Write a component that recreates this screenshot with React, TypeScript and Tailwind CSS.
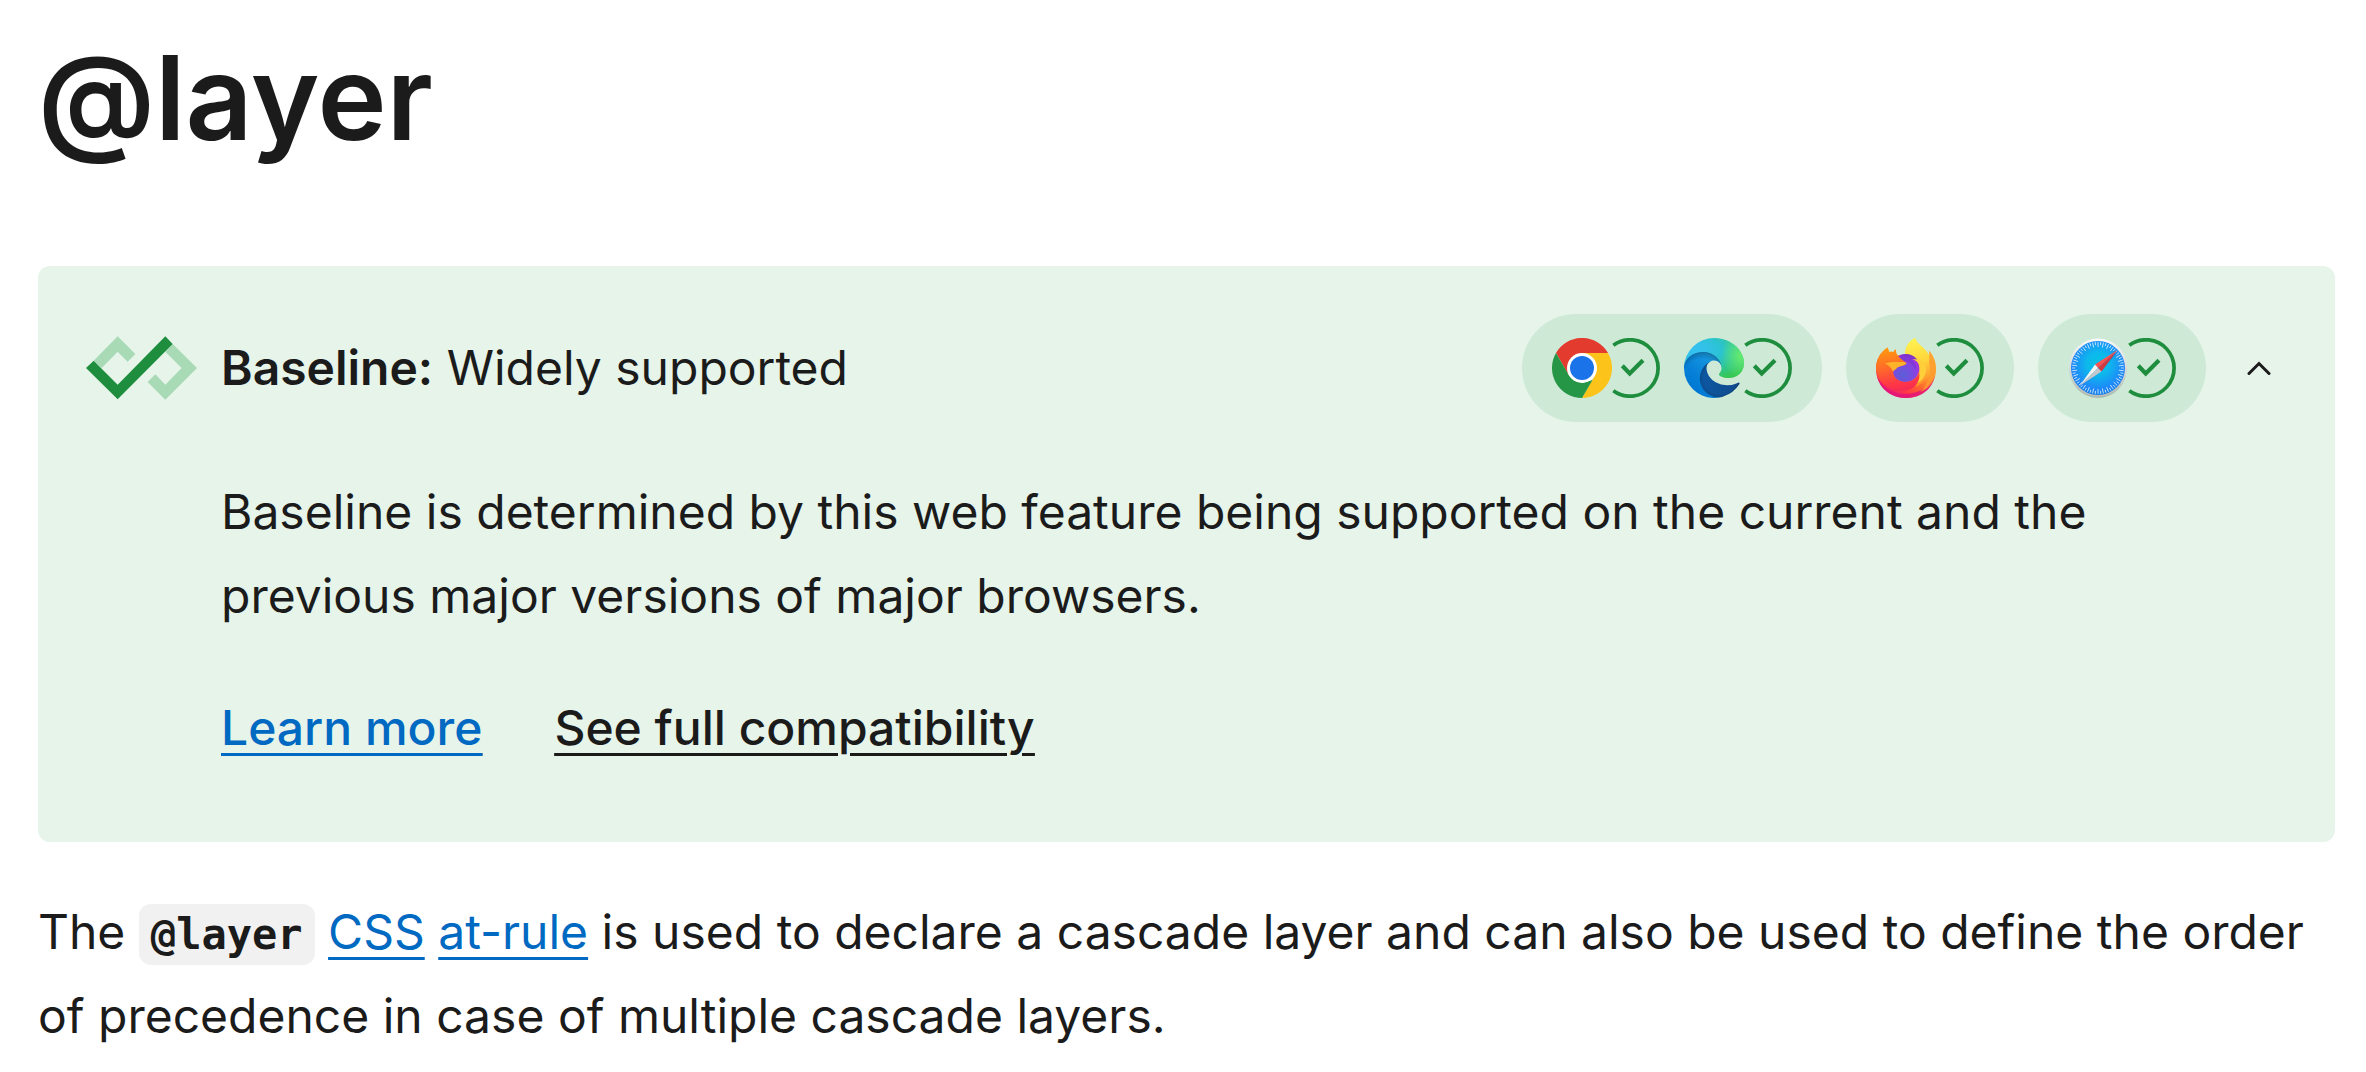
import React, { useState } from "react";

function BaselineLogo() {
  return (
    <svg viewBox="78 110 333 190" className="h-16 w-[111px] shrink-0" aria-hidden="true">
      <path fill="#a8dab5" d="M101 183 173 110l53 53-23 23-30-30-48 49z" />
      <path fill="#a8dab5" d="m338 133 73 72-95 95-53-53 23-23 30 31 49-50-49-49z" />
      <path fill="#1e8e3e" d="m78 205 23-22 72 72 143-145 22 23-165 166z" />
    </svg>
  );
}

function ChromeLogo() {
  return (
    <svg viewBox="0 0 60 60" className="size-[60px]" role="img" aria-label="Chrome">
      <path fill="#e33b2e" d="M4 15a30 30 0 0 1 52 0H30L17 37.5z" />
      <path fill="#fcc31a" d="M56 15a30 30 0 0 1-26 45l13-22.5L30 15z" />
      <path fill="#259645" d="M30 60A30 30 0 0 1 4 15l13 22.5L30 45l10.500-3z" />
      <circle cx="30" cy="30" r="15" fill="#fff" />
      <circle cx="30" cy="30" r="12" fill="#1a73e8" />
    </svg>
  );
}

function EdgeLogo() {
  return (
    <svg viewBox="0 0 256 256" className="size-[60px]" role="img" aria-label="Edge">
      <defs>
        <linearGradient id="edge-a" x1="63.33" y1="180" x2="241.67" y2="180" gradientUnits="userSpaceOnUse">
          <stop offset="0" stopColor="#0c59a4" />
          <stop offset="1" stopColor="#114a8b" />
        </linearGradient>
        <radialGradient id="edge-b" cx="161.83" cy="788.4" r="95.38" gradientTransform="matrix(.99992 0 0 .9498 -4.62 -570.39)" gradientUnits="userSpaceOnUse">
          <stop offset=".72" stopOpacity="0" />
          <stop offset=".95" stopOpacity=".53" />
          <stop offset="1" />
        </radialGradient>
        <linearGradient id="edge-c" x1="157.35" y1="104" x2="45.96" y2="226" gradientUnits="userSpaceOnUse">
          <stop offset="0" stopColor="#1b9de2" />
          <stop offset=".16" stopColor="#1595df" />
          <stop offset=".67" stopColor="#0680d7" />
          <stop offset="1" stopColor="#0078d4" />
        </linearGradient>
        <radialGradient id="edge-d" cx="-340.29" cy="62.99" r="143.24" gradientTransform="matrix(.15 -.99 -.8 -.12 176.64 -125.4)" gradientUnits="userSpaceOnUse">
          <stop offset=".76" stopOpacity="0" />
          <stop offset=".95" stopOpacity=".5" />
          <stop offset="1" />
        </radialGradient>
        <radialGradient id="edge-e" cx="113.37" cy="570.21" r="202.43" gradientTransform="matrix(-.04 1 2.13 .08 -1179.54 -106.69)" gradientUnits="userSpaceOnUse">
          <stop offset="0" stopColor="#35c1f1" />
          <stop offset=".11" stopColor="#34c1ed" />
          <stop offset=".23" stopColor="#2fc2df" />
          <stop offset=".31" stopColor="#2bc3d2" />
          <stop offset=".67" stopColor="#36c752" />
        </radialGradient>
        <radialGradient id="edge-f" cx="376.52" cy="567.97" r="97.34" gradientTransform="matrix(.28 .96 .78 -.23 -303.76 -148.5)" gradientUnits="userSpaceOnUse">
          <stop offset="0" stopColor="#66eb6e" />
          <stop offset="1" stopColor="#66eb6e" stopOpacity="0" />
        </radialGradient>
        <path id="edge-dark" d="M235.68 195.46a93.73 93.73 0 0 1-10.54 4.71 101.87 101.87 0 0 1-35.9 6.46c-47.32 0-88.54-32.55-88.54-74.32A31.48 31.48 0 0 1 117.13 105c-42.8 1.8-53.8 46.4-53.8 72.53 0 73.88 68.09 81.37 82.76 81.37 7.91 0 19.84-2.3 27-4.56l1.31-.44a128.34 128.34 0 0 0 66.6-52.8 4 4 0 0 0-5.32-5.64z" />
        <path id="edge-mid" d="M110.34 246.34A79.2 79.2 0 0 1 87.6 225a80.72 80.72 0 0 1 29.53-120c3.12-1.47 8.45-4.13 15.54-4a32.35 32.35 0 0 1 25.69 13 31.88 31.88 0 0 1 6.36 18.66c0-.21 24.46-79.6-80-79.6-43.9 0-80 41.66-80 78.21a130.15 130.15 0 0 0 12.11 56 128 128 0 0 0 156.38 67.11 75.55 75.55 0 0 1-62.78-8z" />
        <path id="edge-top" d="M156.94 153.78c-.81 1.05-3.3 2.5-3.3 5.66 0 2.61 1.7 5.12 4.72 7.23 14.38 10 41.49 8.68 41.56 8.68a59.56 59.56 0 0 0 30.27-8.35 61.38 61.38 0 0 0 30.43-52.88c.26-22.41-8-37.31-11.34-43.91C228.09 28.76 182.35 5 132.61 5a128 128 0 0 0-128 126.2c.48-36.54 36.8-66.05 80-66.05 3.5 0 23.46.34 42 10.07 16.34 8.58 24.9 18.94 30.85 29.21 6.18 10.67 7.28 24.15 7.28 29.52s-2.74 13.33-7.8 19.83z" />
      </defs>
      <g transform="translate(-4.63 -4.92)">
        <use href="#edge-dark" fill="url(#edge-a)" />
        <use href="#edge-dark" fill="url(#edge-b)" opacity=".35" />
        <use href="#edge-mid" fill="url(#edge-c)" />
        <use href="#edge-mid" fill="url(#edge-d)" opacity=".41" />
        <use href="#edge-top" fill="url(#edge-e)" />
        <use href="#edge-top" fill="url(#edge-f)" />
      </g>
    </svg>
  );
}

function FirefoxLogo() {
  return (
    <svg viewBox="0 0 60 60" className="size-[60px]" role="img" aria-label="Firefox">
      <defs>
        <linearGradient id="ff-body" x1="50" y1="8" x2="18" y2="60" gradientUnits="userSpaceOnUse">
          <stop offset="0" stopColor="#ffe141" />
          <stop offset=".35" stopColor="#ffb02d" />
          <stop offset=".6" stopColor="#ff6a2c" />
          <stop offset=".82" stopColor="#ff3647" />
          <stop offset="1" stopColor="#e31587" />
        </linearGradient>
        <linearGradient id="ff-left" x1="14" y1="10" x2="22" y2="58" gradientUnits="userSpaceOnUse">
          <stop offset="0" stopColor="#ff980e" />
          <stop offset=".4" stopColor="#ff6a2a" />
          <stop offset=".75" stopColor="#ff3647" />
          <stop offset="1" stopColor="#f0245c" />
        </linearGradient>
        <linearGradient id="ff-flame" x1="40" y1="0" x2="50" y2="46" gradientUnits="userSpaceOnUse">
          <stop offset="0" stopColor="#fff44f" />
          <stop offset=".5" stopColor="#ffd53c" />
          <stop offset="1" stopColor="#ff8a2c" />
        </linearGradient>
        <radialGradient id="ff-globe" cx="27" cy="37" r="22" gradientUnits="userSpaceOnUse">
          <stop offset="0" stopColor="#5b5fd6" />
          <stop offset=".45" stopColor="#7a4be0" />
          <stop offset=".8" stopColor="#a035e0" />
          <stop offset="1" stopColor="#8a2bc4" />
        </radialGradient>
      </defs>
      <path fill="url(#ff-body)" d="M11.500 9.600C12.200 11 12.700 12.600 13 14c1.600-.3 3.200-.1 4.300.2.500-1.200 1.400-2.200 2.500-2.900-.2 2.200.2 4.200 1.600 5.700L29 17C29 9 33 3 39.200 0c1.200 5.500 6 7.600 9.600 11.500 1.800 2 3.200 3.700 3.900 5.500.5-1.400.5-2.900.3-4.400 4.400 5 7 11.400 7 18.400 0 16-13 29-30 29S0 47.500 0 31C0 22 4 14.500 11.500 9.600z" />
      <path fill="#e31578" d="M1 38c4 10 14 18 27 18 14 0 26-7 31-19-2 14-14 23-29 23C15.500 60 4 51 1 38z" opacity=".85" />
      <path fill="url(#ff-flame)" d="M29 16.500C29 9 33 3 39.200 0c1.200 5.500 6 7.600 9.600 11.500C54 17 56 24 54 32c-2 8-7 14-15 17 5-8 5-20-2-28z" />
      <path fill="#ff9a30" d="M53 12.600c4.400 5 7 11.400 7 18.400 0 11-7 20-16 23 8-7 12-18 9-30 .6-3.600.6-7 0-11.400z" opacity=".85" />
      <circle cx="29.500" cy="30" r="14" fill="url(#ff-globe)" />
      <path fill="#6b36c8" d="M30 16c5 0 10 3 12.500 7-3-1.500-5-1.500-7-1 3 2 5 6 4 10-3-7-8-10-15-9-2-3 1-7 5.500-7z" opacity=".55" />
      <path fill="#ffcf3a" d="M36 21.500c5 0 8 5 7.800 11C43.500 41 37 47 29 47c14 2 22-8 21-17-.7-6-6-10-14-8.500z" />
      <path fill="url(#ff-left)" d="M11.500 9.600C12.200 11 12.700 12.600 13 14c1.600-.3 3.200-.1 4.300.2.500-1.200 1.400-2.200 2.500-2.900-.2 3 1 6 3.600 8.100 2.600 2 5 4 7 5.600-.5 1.800-3 2.700-7 3.500-2 .5-3 1.500-4 3-2 .8-2.400 1.500-2.200 3C18 40 22 44 29 44c8 0 13-5 14-10 2 8-3 16-11 18C18 56 2 48 0 31 0 22 4 14.500 11.500 9.600z" />
      <path fill="#ffb32a" d="M9 25.500c5-2 11-1.500 16-1.500 2 0 4 .2 5.500 1-.5 1.800-3 2.700-7 3.500-2 .5-3 1.500-4 3-2 .8-2.400 1.500-2.200 3C16 30 13 27 9 25.500z" />
    </svg>
  );
}

const ticks = Array.from({ length: 60 }, (_, i) => i * 6);

function SafariLogo() {
  return (
    <svg viewBox="0 0 60 60" className="size-[60px]" role="img" aria-label="Safari">
      <defs>
        <linearGradient id="sf-rim" x1="0" y1="0" x2="0" y2="1">
          <stop offset="0" stopColor="#fafafa" />
          <stop offset="1" stopColor="#b9bdbb" />
        </linearGradient>
        <radialGradient id="sf-face" cx=".5" cy=".42" r=".6">
          <stop offset="0" stopColor="#06c2e7" />
          <stop offset=".35" stopColor="#0db8ec" />
          <stop offset=".8" stopColor="#1f86f9" />
          <stop offset="1" stopColor="#107ddd" />
        </radialGradient>
      </defs>
      <ellipse cx="30" cy="31" rx="28.500" ry="29" fill="#9aa8a0" opacity=".7" />
      <circle cx="30" cy="29.500" r="29" fill="url(#sf-rim)" />
      <circle cx="30" cy="30" r="27" fill="url(#sf-face)" />
      <g stroke="#d9f0ff" strokeWidth=".8">
        {ticks.map((deg) => (
          <path key={deg} d={deg % 12 === 0 ? "M30 4v5" : "M30 4v3"} transform={`rotate(${deg} 30 30)`} />
        ))}
      </g>
      <path fill="#0b5fae" opacity=".35" d="m50 13.500-17 20L14 47z" />
      <path fill="#ff5150" d="M49.500 12 27 26.500l3 3.500z" />
      <path fill="#d03a41" d="M49.500 12 30 30l3.500 3.500z" />
      <path fill="#f4f4f4" d="M27 26.500 11.500 48 30 30z" />
      <path fill="#c4c8cc" d="M33.500 33.500 11.500 48 30 30z" />
    </svg>
  );
}

function SupportedMark() {
  return (
    <svg viewBox="0 0 48 60" className="h-[60px] w-12" fill="none" stroke="#1e8e3e" role="img" aria-label="supported">
      <path strokeWidth="3.700" d="M1.300 7.200a28.200 28.200 0 1 1 0 45.600" />
      <path strokeWidth="4.200" d="m10.300 27.800 7.400 7.700 13.300-13.300" />
    </svg>
  );
}

const engines = [
  { name: "chromium", logos: [ChromeLogo, EdgeLogo] },
  { name: "gecko", logos: [FirefoxLogo] },
  { name: "webkit", logos: [SafariLogo] },
];

export default function App() {
  const [open, setOpen] = useState(true);

  return (
    <main className="bg-white pt-7 pr-[31px] pb-3 pl-[38px] font-['Inter',sans-serif] text-[48px] leading-[84px] text-[#1b1b1b]">
      <h1 className="mb-[98px] text-[117px] leading-[140px] font-semibold">@layer</h1>

      <section className="mb-12 rounded-xl bg-[#e6f4ea] px-12 pt-12 pb-[72px]">
        <div className="flex items-center gap-6">
          <BaselineLogo />
          <h2 className="flex-1">
            <strong className="font-semibold">Baseline:</strong> Widely supported
          </h2>
          {engines.map((engine) => (
            <div key={engine.name} className="flex gap-6 rounded-full bg-[#ceead6] px-[30px] py-6">
              {engine.logos.map((Logo, i) => (
                <span key={i} className="flex">
                  <Logo />
                  <SupportedMark />
                </span>
              ))}
            </div>
          ))}
          <button
            type="button"
            aria-label="Toggle details"
            aria-expanded={open}
            onClick={() => setOpen(!open)}
            className="flex h-14 w-[57px] items-center justify-center"
          >
            <svg viewBox="0 0 24 16" className="h-4 w-6" fill="none" stroke="#1b1b1b" strokeWidth="3" strokeLinecap="round" strokeLinejoin="miter">
              <path d={open ? "M2 13.500 12 3.500l10 10" : "M2 3.500l10 10 10-10"} />
            </svg>
          </button>
        </div>

        {open && (
          <div className="mt-12 pl-[135px]">
            <p>
              Baseline is determined by this web feature being supported on the current and the previous major versions
              of major browsers.
            </p>
            <div className="mt-12 flex gap-[72px] font-medium underline decoration-3 underline-offset-8">
              <a href="#learn-more" className="text-[#0069c2]">Learn more</a>
              <a href="#browser_compatibility">See full compatibility</a>
            </div>
          </div>
        )}
      </section>

      <p>
        The{" "}
        <code className="rounded-xl bg-[#f2f1f1] px-3 py-[6px] font-['DejaVu_Sans_Mono',monospace] text-[42px] leading-none font-bold">@layer</code>{" "}
        <a href="#css" className="text-[#0069c2] underline decoration-3 underline-offset-8">CSS</a>{" "}
        <a href="#at-rule" className="text-[#0069c2] underline decoration-3 underline-offset-8">at-rule</a> is used to
        declare a cascade layer and can also be used to define the order of precedence in case of multiple cascade
        layers.
      </p>
    </main>
  );
}
